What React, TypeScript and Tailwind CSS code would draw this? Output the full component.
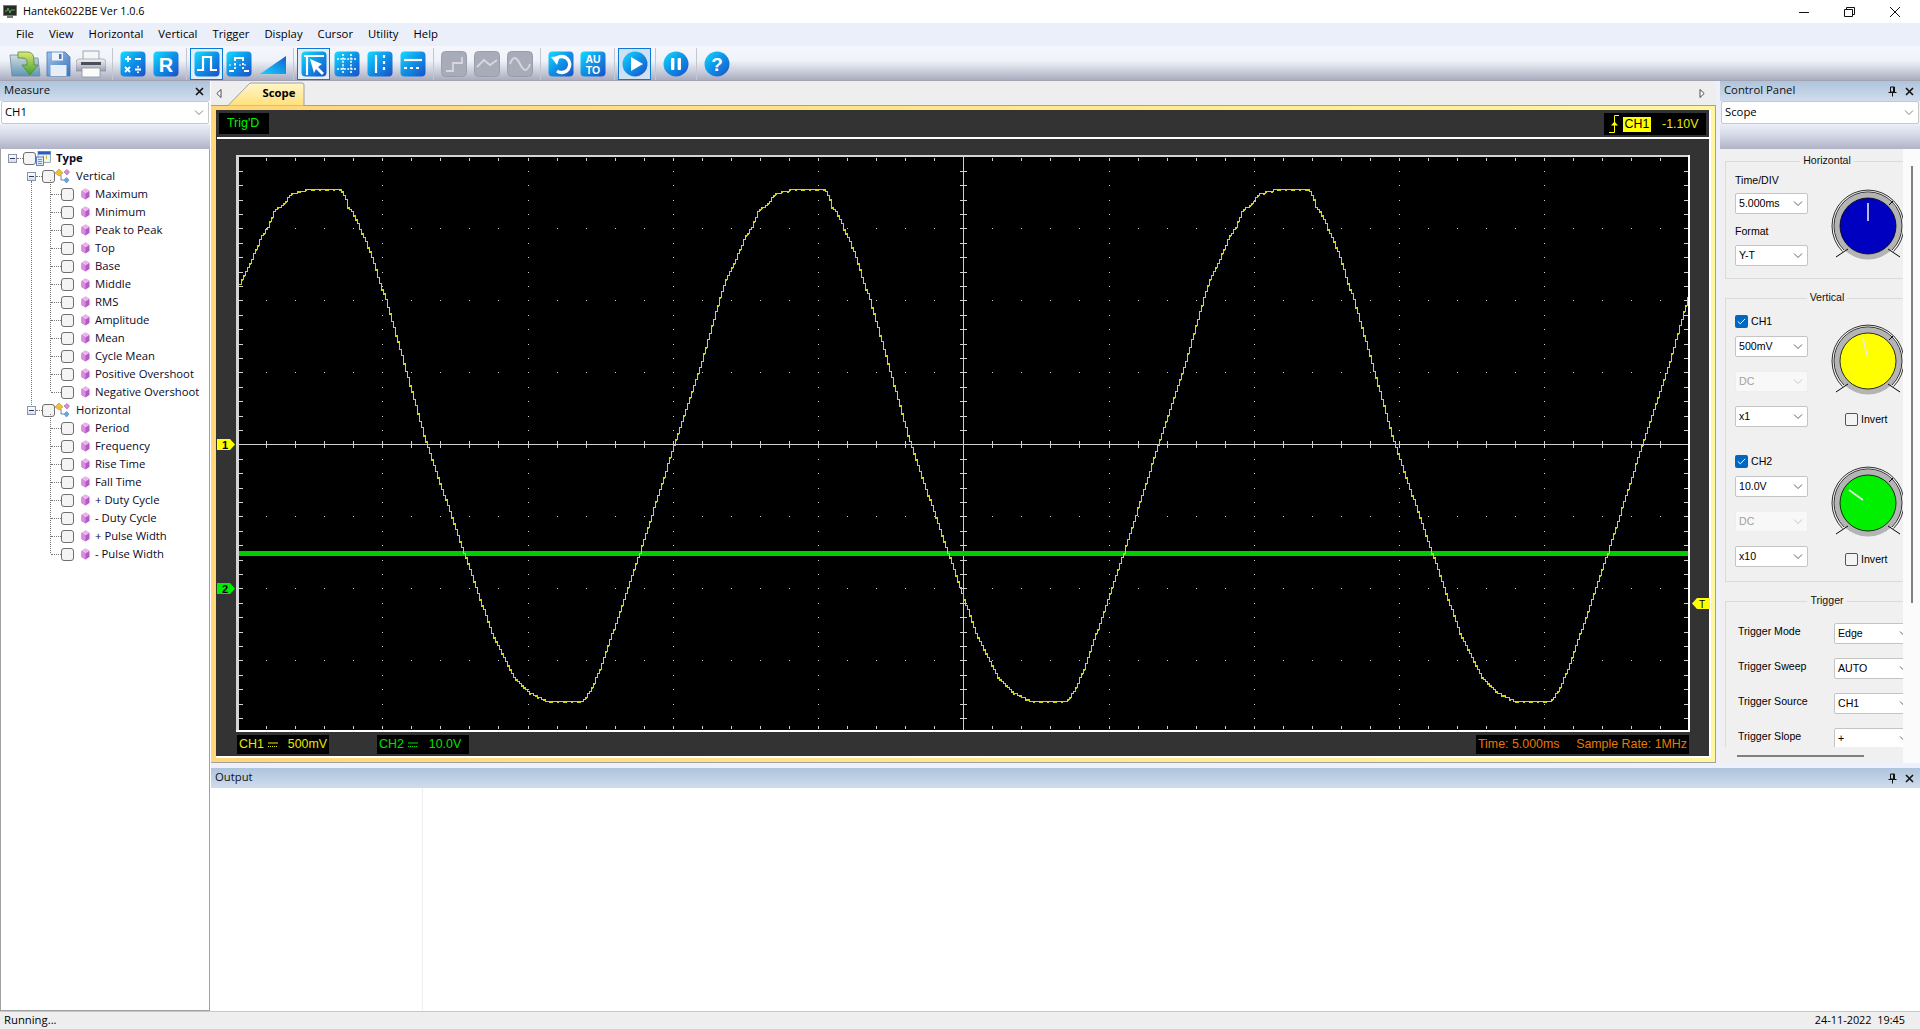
import React from "react";

const ui = "font-['Open_Sans','Noto_Sans',sans-serif]";
const arial = "font-['Liberation_Sans',Arial,sans-serif]";

// one period of the captured waveform, page pixels
const period = [
  [239, 285], [243, 275], [250, 262], [260, 238], [267, 227], [273, 212], [282, 205], [290, 195],
  [298, 192], [310, 190], [340, 189], [345, 200], [347, 208], [353, 215], [360, 232], [367, 247],
  [373, 263], [378, 282], [385, 300], [426, 446], [463, 553], [490, 631], [514, 680], [529, 694],
  [545, 701], [582, 702], [590, 690], [600, 667], [639, 553], [673, 446], [700, 365], [723, 285],
];
const waveY = (x: number) => {
  const px = 239 + ((x - 239) % 484);
  for (let i = 1; i < period.length; i++) {
    if (px <= period[i][0]) {
      const [x0, y0] = period[i - 1];
      const [x1, y1] = period[i];
      return y0 + ((px - x0) / (x1 - x0)) * (y1 - y0);
    }
  }
  return 285;
};
const buildWave = () => {
  let prev = Math.round(waveY(239));
  let line = `M239 ${prev}`;
  let blobs = "";
  for (let x = 241; x <= 1688; x += 2) {
    const y = Math.round(waveY(x) / 2) * 2;
    line += `H${x}V${y}`;
    // the sampled trace doubles up on some steps
    if ((x * 13) % 7 < 3) blobs += `M${x - 2} ${prev}h2v2h-2z`;
    prev = y;
  }
  return { line, blobs };
};
const wave = buildWave();

const range = (n: number) => Array.from({ length: n }, (_, i) => i);
const GX = (k: number) => Math.round(237 + 29.05 * k);
const GY = (k: number) => Math.round(157.3 + 14.4 * k);

const Plot = () => (
  <svg viewBox="236 156 1454 577" width={1454} height={577} className="block bg-black" shapeRendering="crispEdges">
    {/* dotted graticule */}
    {[1, 2, 3, 5, 6, 7].map((r) =>
      range(49).map((k) => <rect key={`r${r}-${k}`} x={GX(k + 1)} y={GY(r * 5)} width={1} height={1} fill="#d0d0d0" />)
    )}
    {[1, 2, 3, 4, 6, 7, 8, 9].map((c) =>
      range(39).map((k) => <rect key={`c${c}-${k}`} x={GX(c * 5)} y={GY(k + 1)} width={1} height={1} fill="#d0d0d0" />)
    )}
    {/* edge ticks */}
    {range(49).map((k) => (
      <g key={k} fill="#d0d0d0">
        <rect x={GX(k + 1)} y={159} width={1} height={k === 24 ? 6 : 3} />
        <rect x={GX(k + 1)} y={k === 24 ? 725 : 727} width={1} height={k === 24 ? 6 : 3} />
        <rect x={GX(k + 1)} y={442} width={1} height={7} />
      </g>
    ))}
    {range(39).map((k) => (
      <g key={k} fill="#d0d0d0">
        <rect x={239} y={GY(k + 1)} width={4} height={1} />
        <rect x={1684} y={GY(k + 1)} width={4} height={1} />
        <rect x={960} y={GY(k + 1)} width={7} height={1} />
      </g>
    ))}
    <rect x={239} y={445} width={1449} height={1} fill="#d0d0d0" />
    <rect x={963} y={158} width={1} height={573} fill="#d0d0d0" />
    <rect x={239} y={552} width={1449} height={5} fill="#00cc00" />
    <path d={wave.line} fill="none" stroke="#d8d800" strokeWidth={1} />
    <path d={wave.blobs} fill="#d8d800" />
    {/* frame */}
    <path d="M236 156H1688V158H239V731H236Z" fill="#d4d4d4" />
    <path d="M1688 156H1690V733H236V731H1688Z" fill="#ffffff" />
  </svg>
);

const Chevron = ({ color = "#707070" }: { color?: string }) => (
  <svg width={10} height={6} viewBox="0 0 10 6" className="shrink-0">
    <path d="M1 0.5L5 4.5L9 0.5" fill="none" stroke={color} strokeWidth={1} />
  </svg>
);

const Combo = ({ value, disabled, className = "w-[73px]" }: { value: string; disabled?: boolean; className?: string }) => (
  <div
    className={`h-[21px] shrink-0 flex items-center justify-between pl-[3px] pr-[4px] rounded-[2px] border ${className} ${
      disabled ? "bg-[#f8f8f8] border-[#eeeeee] text-[#a0a0a0]" : "bg-white border-[#c4c4c4] text-black"
    }`}
  >
    <span>{value}</span>
    <Chevron color={disabled ? "#c4c4c4" : "#606060"} />
  </div>
);

const Knob = ({ color, hand, className = "" }: { color: string; hand: number[]; className?: string }) => (
  <svg width={80} height={80} viewBox="-40 -40 80 80" className={`block shrink-0 ${className}`}>
    <path d="M-25.5 25.5A36 36 0 1 1 25.5 25.5" fill="none" stroke="#000" strokeWidth={0.8} />
    <circle r={33.5} fill="#b4b4b4" />
    <path d="M-24 24A34 34 0 1 1 24 24" fill="none" stroke="#000" strokeWidth={0.8} />
    <path d="M-20 23L-32 31M20 23L32 31M21 -21L25 -25" stroke="#000" strokeWidth={1} />
    <circle r={28} fill={color} stroke="#000" strokeWidth={0.8} />
    <line x1={hand[0]} y1={hand[1]} x2={hand[2]} y2={hand[3]} stroke="#e8e8e8" strokeWidth={1.6} />
  </svg>
);

const GroupBox = ({ title, className, children }: { title: string; className: string; children: React.ReactNode }) => (
  <div className={`relative ml-[5px] w-[204px] border border-[#dadada] shrink-0 ${className}`}>
    <div className="absolute -top-[10px] left-0 right-0 flex justify-center">
      <span className="bg-[#f0f0f0] px-[3px] leading-[16px] text-[#111]">{title}</span>
    </div>
    {children}
  </div>
);

const BlueCheck = ({ label }: { label: string }) => (
  <div className="h-[13px] flex items-center gap-[3px]">
    <div className="w-[13px] h-[13px] rounded-[2px] bg-[#0067c0] flex items-center justify-center">
      <svg width={9} height={7} viewBox="0 0 9 7">
        <path d="M0.8 3.4L3.3 5.8L8.2 0.8" fill="none" stroke="#fff" strokeWidth={1} />
      </svg>
    </div>
    <span className="leading-[13px] -mt-px">{label}</span>
  </div>
);

const Invert = ({ className }: { className: string }) => (
  <div className={`ml-[17px] flex items-center gap-[3px] h-[13px] ${className}`}>
    <div className="w-[13px] h-[13px] rounded-[2px] border border-[#555] bg-[#f4f4f4]" />
    <span>Invert</span>
  </div>
);

const Channel = ({
  label, volts, probe, color, hand, knobClass, invertClass,
}: {
  label: string; volts: string; probe: string; color: string; hand: number[]; knobClass: string; invertClass: string;
}) => (
  <div className="flex pl-[9px]">
    <div className="w-[73px] flex flex-col">
      <BlueCheck label={label} />
      <Combo value={volts} className="w-[73px] mt-[8px]" />
      <Combo value="DC" disabled className="w-[73px] mt-[14px]" />
      <Combo value={probe} className="w-[73px] mt-[14px]" />
    </div>
    <div className="ml-[20px] flex flex-col">
      <Knob color={color} hand={hand} className={knobClass} />
      <Invert className={invertClass} />
    </div>
  </div>
);

const triggerRows = [
  ["Trigger Mode", "Edge"],
  ["Trigger Sweep", "AUTO"],
  ["Trigger Source", "CH1"],
  ["Trigger Slope", "+"],
];

const ControlPanel = () => (
  <div className={`w-[200px] flex flex-col shrink-0 ${ui}`}>
    <PanelHeader title="Control Panel" pin />
    <PanelCombo value="Scope" />
    <Band />
    <div className={`h-[599px] flex bg-[#f0f0f0] text-[10.6px] overflow-hidden ${arial}`}>
      <div className="w-[183px] overflow-hidden flex flex-col">
        <GroupBox title="Horizontal" className="mt-[12px] h-[118px]">
          <div className="flex pl-[9px]">
            <div className="flex flex-col w-[73px] pt-[10px]">
              <div className="h-[16px] leading-[16px]">Time/DIV</div>
              <Combo value="5.000ms" className="w-[73px] mt-[5px]" />
              <div className="h-[16px] leading-[16px] mt-[9px]">Format</div>
              <Combo value="Y-T" className="w-[73px] mt-[6px]" />
            </div>
            <Knob color="#0000c0" hand={[0, -23, 0, -5]} className="ml-[20px] mt-[24px]" />
          </div>
        </GroupBox>
        <GroupBox title="Vertical" className="mt-[19px] h-[284px] pt-[16px]">
          <Channel label="CH1" volts="500mV" probe="x1" color="#ffff00" hand={[-5, -23, -1, -5]} knobClass="mt-[6px]" invertClass="mt-[12px]" />
          <div className="h-[28px]" />
          <Channel label="CH2" volts="10.0V" probe="x10" color="#00f000" hand={[-19, -13, -5, -3]} knobClass="mt-[8px]" invertClass="mt-[10px]" />
        </GroupBox>
        <GroupBox title="Trigger" className="mt-[19px] h-[160px] pt-[21px]">
          <div className="flex flex-col gap-[14px] pl-[12px]">
            {triggerRows.map(([label, value]) => (
              <div key={label} className="flex items-center">
                <span className="w-[96px] -mt-[3px]">{label}</span>
                <Combo value={value} className="w-[80px]" />
              </div>
            ))}
          </div>
        </GroupBox>
      </div>
      <div className="w-[17px] bg-[#fbfbfb] pt-[17px] pl-[8px]">
        <div className="w-[2px] h-[437px] bg-[#808080]" />
      </div>
    </div>
    <div className="h-[16px] bg-[#f0f0f0] flex">
      <div className="w-[183px] pt-[8px] pl-[17px]">
        <div className="w-[127px] h-[2px] bg-[#808080]" />
      </div>
      <div className="w-[17px] bg-[#fbfbfb]" />
    </div>
  </div>
);

const CloseX = () => (
  <svg width={9} height={9} viewBox="0 0 9 9">
    <path d="M1 1L8 8M8 1L1 8" stroke="#111" strokeWidth={1.6} />
  </svg>
);
const Pin = () => (
  <svg width={9} height={11} viewBox="0 0 9 11">
    <path d="M2.5 1H6.5V6H2.5ZM5.5 1V6M0.5 6.5H8.5M4.5 7V10.5" fill="none" stroke="#111" strokeWidth={1} />
  </svg>
);

const PanelHeader = ({ title, pin, className = "" }: { title: string; pin?: boolean; className?: string }) => (
  <div className={`h-[20px] shrink-0 flex items-center bg-[linear-gradient(180deg,#aec4dc,#d0dcec)] text-[11.3px] text-[#111] pl-[4px] ${className}`}>
    <span className="flex-1 -mt-px">{title}</span>
    {pin && <span className="mr-[8px] flex"><Pin /></span>}
    <span className="mr-[6px] flex"><CloseX /></span>
  </div>
);

const PanelCombo = ({ value }: { value: string }) => (
  <div className="h-[23px] shrink-0 mx-[1px] bg-white border border-[#c8c8c8] rounded-[2px] flex items-center justify-between pl-[3px] pr-[4px] text-[11.3px]">
    <span>{value}</span>
    <Chevron color="#808080" />
  </div>
);

const Band = () => <div className="h-[25px] shrink-0 bg-[linear-gradient(180deg,#eceff8,#d8dbe8_40%,#b0b3c6)]" />;

// ---- toolbar icons ----
const Defs = () => (
  <svg width={0} height={0} className="block">
    <defs>
      <linearGradient id="btn" x1="0" y1="0" x2="1" y2="1">
        <stop offset="0" stopColor="#14dcff" />
        <stop offset="0.5" stopColor="#0f90e6" />
        <stop offset="1" stopColor="#1a50c8" />
      </linearGradient>
      <linearGradient id="ramp" x1="0" y1="1" x2="1" y2="0">
        <stop offset="0" stopColor="#18d4ff" />
        <stop offset="1" stopColor="#1260d0" />
      </linearGradient>
      <linearGradient id="folder" x1="0" y1="0" x2="0" y2="1">
        <stop offset="0" stopColor="#d4dde0" />
        <stop offset="1" stopColor="#5f94b8" />
      </linearGradient>
      <linearGradient id="arrow" x1="0" y1="0" x2="0" y2="1">
        <stop offset="0" stopColor="#e0e870" />
        <stop offset="1" stopColor="#40a030" />
      </linearGradient>
      <linearGradient id="floppy" x1="0" y1="0" x2="1" y2="1">
        <stop offset="0" stopColor="#a0c4ec" />
        <stop offset="1" stopColor="#3a74bc" />
      </linearGradient>
      <linearGradient id="printer" x1="0" y1="0" x2="0" y2="1">
        <stop offset="0" stopColor="#f4f4f4" />
        <stop offset="1" stopColor="#9aa0ac" />
      </linearGradient>
    </defs>
  </svg>
);

const Btn = ({ children, circle, gray }: { children: React.ReactNode; circle?: boolean; gray?: boolean }) => (
  <svg width={26} height={26} viewBox="0 0 26 26" className="block shrink-0">
    {circle ? (
      <circle cx={13} cy={13} r={12.5} fill="url(#btn)" />
    ) : (
      <rect x={0.5} y={0.5} width={25} height={25} rx={4} fill={gray ? "#a8acb8" : "url(#btn)"} stroke={gray ? "#9a9eaa" : "none"} />
    )}
    {children}
  </svg>
);

const W = { fill: "none", stroke: "#fff", strokeWidth: 2.2 };
const G = { fill: "none", stroke: "#d6d8de", strokeWidth: 1.8 };

const Sep = () => <div className="w-px h-[32px] bg-[#c4c6d0] shrink-0" />;
const Selected = ({ children, strong }: { children: React.ReactNode; strong?: boolean }) => (
  <div className={`w-[33px] h-[32px] shrink-0 flex items-center justify-center border border-[#0a78d4] ${strong ? "bg-[#cfe0f2]" : "bg-[#e4eefa]"}`}>
    {children}
  </div>
);

const Toolbar = () => (
  <div className="h-[35px] shrink-0 flex items-center pl-[9px] bg-[linear-gradient(180deg,#f6f7fd_0%,#f0f2fa_42%,#c0c3d2_80%,#aaadc0_97%,#9a9aa8_100%)]">
    <svg width={32} height={28} viewBox="0 0 32 28" className="block shrink-0">
      <path d="M1 5H11L13 8H29L31 26H3Z" fill="url(#folder)" stroke="#6a8a9c" strokeWidth={0.8} />
      <path d="M9 2H18C24 2 25 6 25 12V15H29L21 25L13 15H18V12C18 9 16 8 13 8H9Z" fill="url(#arrow)" stroke="#4a8a3a" strokeWidth={0.8} />
    </svg>
    <svg width={25} height={26} viewBox="0 0 25 26" className="block shrink-0 ml-[5px]">
      <path d="M1 1H19L24 6V25H1Z" fill="url(#floppy)" stroke="#4878b4" strokeWidth={0.8} />
      <rect x={6} y={1.5} width={11} height={8} fill="#eef4fa" />
      <rect x={13} y={3} width={2.5} height={5} fill="#4878b4" />
      <rect x={4.5} y={14} width={16} height={11} fill="#e8eef6" />
    </svg>
    <svg width={30} height={28} viewBox="0 0 30 28" className="block shrink-0 ml-[5px]">
      <rect x={7} y={1} width={16} height={11} fill="#f4f6f8" stroke="#8a93a3" strokeWidth={0.8} />
      <path d="M3 9H27Q30 9 30 13V21H0V13Q0 9 3 9Z" fill="url(#printer)" stroke="#808694" strokeWidth={0.6} />
      <rect x={5} y={12} width={20} height={3} fill="#4a4f5a" />
      <rect x={6} y={18} width={18} height={9} fill="#fbfbfb" stroke="#8a93a3" strokeWidth={0.8} />
    </svg>
    <div className="ml-[6px]"><Sep /></div>
    <div className="ml-[7px]">
      <Btn>
        <path d="M5 8H11M8 5V11M15 8H21M5 16L10 21M10 16L5 21M15 18.5H21" {...W} strokeWidth={1.8} />
        <circle cx={18} cy={15.8} r={1} fill="#fff" />
        <circle cx={18} cy={21.2} r={1} fill="#fff" />
      </Btn>
    </div>
    <div className="ml-[7px]">
      <Btn>
        <text x={13} y={21} textAnchor="middle" fontSize={20} fontWeight={700} fill="#fff" fontFamily="'Liberation Sans',sans-serif">R</text>
      </Btn>
    </div>
    <div className="ml-[7px]"><Sep /></div>
    <div className="ml-[3px]">
      <Selected>
        <Btn><path d="M3 19H9V6H17V19H23" {...W} /></Btn>
      </Selected>
    </div>
    <div className="ml-[3px]">
      <Btn>
        <path d="M3 20H8M18 20H23M8 7H18" {...W} />
        <path d="M9 8V20M17 8V20" {...W} strokeWidth={1.8} strokeDasharray="2 2" />
        <path d="M3 14H23" {...W} strokeWidth={1} strokeDasharray="2 3" />
      </Btn>
    </div>
    <svg width={26} height={26} viewBox="0 0 26 26" className="block shrink-0 ml-[8px]">
      <path d="M0 23H26V5Z" fill="url(#ramp)" />
    </svg>
    <div className="ml-[7px]"><Sep /></div>
    <div className="ml-[3px]">
      <Selected>
        <Btn>
          <path d="M3 5H23M6 5V24" {...W} />
          <path d="M9 8L21 13L17 16L23 22L21 24L15 18L13 22Z" fill="#fff" />
        </Btn>
      </Selected>
    </div>
    <div className="ml-[4px]">
      <Btn>
        <path d="M3 8H23M3 18H23M9 3V23M17 3V23" {...W} strokeWidth={1.6} strokeDasharray="2 1.4" />
      </Btn>
    </div>
    <div className="ml-[7px]">
      <Btn><path d="M9 4V22" {...W} /><path d="M17 4V22" {...W} strokeDasharray="3 3" /></Btn>
    </div>
    <div className="ml-[7px]">
      <Btn><path d="M4 9H22" {...W} /><path d="M4 17H22" {...W} strokeDasharray="3 3" /></Btn>
    </div>
    <div className="ml-[7px]"><Sep /></div>
    <div className="ml-[7px]">
      <Btn gray><path d="M5 20H12V12H21V6" {...G} /></Btn>
    </div>
    <div className="ml-[7px]">
      <Btn gray><path d="M3 16L10 9L16 14L23 9" {...G} /></Btn>
    </div>
    <div className="ml-[7px]">
      <Btn gray><path d="M3 13C6 5 9 5 13 13C17 21 20 21 23 13" {...G} /></Btn>
    </div>
    <div className="ml-[7px]"><Sep /></div>
    <div className="ml-[7px]">
      <Btn>
        <path d="M8 8A8 8 0 1 1 9 20" fill="none" stroke="#fff" strokeWidth={3.4} />
        <path d="M3 6L12 5L9 14Z" fill="#fff" />
      </Btn>
    </div>
    <div className="ml-[6px]">
      <Btn>
        <text x={13} y={11.5} textAnchor="middle" fontSize={10.5} fontWeight={700} fill="#fff" fontFamily="'Liberation Sans',sans-serif">AU</text>
        <text x={13} y={22.5} textAnchor="middle" fontSize={10.5} fontWeight={700} fill="#fff" fontFamily="'Liberation Sans',sans-serif">TO</text>
      </Btn>
    </div>
    <div className="ml-[8px]"><Sep /></div>
    <div className="ml-[3px]">
      <Selected strong>
        <Btn circle><path d="M9 6L21 13L9 20Z" fill="#fff" /></Btn>
      </Selected>
    </div>
    <div className="ml-[4px]"><Sep /></div>
    <div className="ml-[7px]">
      <Btn circle><rect x={8} y={7} width={3.4} height={12} rx={1} fill="#fff" /><rect x={14.6} y={7} width={3.4} height={12} rx={1} fill="#fff" /></Btn>
    </div>
    <div className="ml-[7px]"><Sep /></div>
    <div className="ml-[7px]">
      <Btn circle>
        <text x={13} y={20} textAnchor="middle" fontSize={19} fontWeight={700} fill="#fff" fontFamily="'Liberation Sans',sans-serif">?</text>
      </Btn>
    </div>
  </div>
);

// ---- tree ----
const Box = () => <div className="w-[13px] h-[13px] shrink-0 rounded-[3px] border border-[#6f6f6f] bg-[#f4f4f4]" />;
const Expander = () => (
  <div className="w-[9px] h-[9px] shrink-0 border border-[#8a93a8] bg-[linear-gradient(180deg,#ffffff,#d8dce6)] flex items-center justify-center">
    <div className="w-[5px] h-px bg-[#2a3a6a]" />
  </div>
);
const Gem = () => (
  <svg width={9} height={12} viewBox="0 0 9 12" className="block shrink-0">
    <path d="M4.5 0.5L8.5 3V9L4.5 11.5L0.5 9V3Z" fill="#b45ac8" />
    <path d="M4.5 0.5L8.5 3L4.5 5.5L0.5 3Z" fill="#eeb4ee" />
    <path d="M0.5 3L4.5 5.5V11.5L0.5 9Z" fill="#d88cdc" />
  </svg>
);
const GroupIcon = () => (
  <svg width={15} height={16} viewBox="0 0 15 16" className="block shrink-0">
    <path d="M0 5L4 1L8 5L4 8Z" fill="#f0c030" stroke="#a88420" strokeWidth={0.5} />
    <path d="M9 4L12 1.5L14.5 4L12 7Z" fill="#d88cdc" stroke="#8a4a9c" strokeWidth={0.5} />
    <path d="M9 12L11.5 9.5L14 12L11.5 15Z" fill="#6aa4e4" stroke="#3468a8" strokeWidth={0.5} />
    <path d="M6 7V12H9" fill="none" stroke="#406890" strokeWidth={0.8} />
  </svg>
);
const TypeIcon = () => (
  <svg width={15} height={15} viewBox="0 0 15 15" className="block shrink-0">
    <rect x={2} y={0.5} width={12.5} height={11} fill="#f4f4e4" stroke="#60708c" strokeWidth={0.6} />
    <rect x={2} y={0.5} width={12.5} height={3} fill="#2a5cc8" />
    <path d="M7.5 4.5V10M10.5 4.5V8" stroke="#c0a020" strokeWidth={0.8} />
    <rect x={0.5} y={6} width={7} height={8.5} fill="#dfeafa" stroke="#3468b8" strokeWidth={0.8} />
    <path d="M2 8.5H6M2 10.5H6M2 12.5H6" stroke="#3468b8" strokeWidth={0.7} />
  </svg>
);

const Leaf = ({ label }: { label: string }) => (
  <div className="h-[18px] flex items-center pl-[50px]">
    <div className="w-[10px] border-t border-dotted border-[#777]" />
    <Box />
    <div className="ml-[7px]"><Gem /></div>
    <span className="ml-[5px]">{label}</span>
  </div>
);

const Branch = ({ label, items, spine }: { label: string; items: string[]; spine: string }) => (
  <div className="relative">
    <div className={`absolute left-[49px] top-[13px] border-l border-dotted border-[#777] ${spine}`} />
    <div className="h-[18px] flex items-center pl-[26px]">
      <Expander />
      <div className="w-[6px] border-t border-dotted border-[#777]" />
      <Box />
      <GroupIcon />
      <span className="ml-[6px]">{label}</span>
    </div>
    {items.map((l) => <Leaf key={l} label={l} />)}
  </div>
);

const verticalItems = ["Maximum", "Minimum", "Peak to Peak", "Top", "Base", "Middle", "RMS", "Amplitude", "Mean", "Cycle Mean", "Positive Overshoot", "Negative Overshoot"];
const horizontalItems = ["Period", "Frequency", "Rise Time", "Fall Time", "+ Duty Cycle", "- Duty Cycle", "+ Pulse Width", "- Pulse Width"];

const MeasurePanel = () => (
  <div className={`w-[211px] shrink-0 flex flex-col pr-px ${ui}`}>
    <PanelHeader title="Measure" />
    <PanelCombo value="CH1" />
    <Band />
    <div className="relative flex-1 bg-white border border-[#a0a0a0] border-t-0 text-[11.3px] text-[#0a0a28]">
      <div className="absolute left-[30px] top-[32px] h-[224px] border-l border-dotted border-[#777]" />
      <div className="h-[18px] flex items-center pl-[7px]">
        <Expander />
        <div className="w-[6px] border-t border-dotted border-[#777]" />
        <Box />
        <TypeIcon />
        <span className="ml-[5px] font-bold">Type</span>
      </div>
      <Branch label="Vertical" items={verticalItems} spine="h-[211px]" />
      <Branch label="Horizontal" items={horizontalItems} spine="h-[139px]" />
    </div>
  </div>
);

// ---- scope ----
const DcMark = ({ color }: { color: string }) => (
  <svg width={10} height={6} viewBox="0 0 10 6" className="block shrink-0">
    <path d="M0 1H10" stroke={color} strokeWidth={1} />
    <path d="M0 4.5H10" stroke={color} strokeWidth={1} strokeDasharray="1 1" />
  </svg>
);

const Tag = ({ label, color, className }: { label: string; color: string; className: string }) => (
  <svg width={18} height={11} viewBox="0 0 18 11" className={`absolute ${className}`}>
    <path d="M0 0H13L18 5.5L13 11H0Z" fill={color} />
    <text x={8} y={10} textAnchor="middle" fontSize={11} fontWeight={700} fill="#000" fontFamily="'Liberation Sans',sans-serif">{label}</text>
  </svg>
);

const ScopeView = () => (
  <div className={`relative flex-1 bg-[#333333] border-r-2 border-b-2 border-white flex flex-col text-[12.4px] leading-none ${arial}`}>
    <div className="h-[27px] shrink-0 flex items-start justify-between pt-[3px] px-[3px]">
      <div className="w-[50px] h-[21px] bg-black text-[#00f000] flex items-center pl-[8px]">Trig'D</div>
      <div className="w-[102px] h-[22px] bg-black flex items-center pl-[4px] text-[#e8e800]">
        <svg width={12} height={18} viewBox="0 0 12 18" className="block shrink-0">
          <path d="M11 0.5H6.5V17.5H1" fill="none" stroke="#ffff00" strokeWidth={1} />
          <path d="M6.5 6.5L10 10.5H3Z" fill="#ffff00" />
        </svg>
        <span className="ml-[3px] w-[28px] h-[15px] bg-[#ffff00] text-black flex items-center justify-center">CH1</span>
        <span className="ml-[11px]">-1.10V</span>
      </div>
    </div>
    <div className="h-[2px] shrink-0 bg-white mr-[-2px] ml-px" />
    <div className="mt-[16px] ml-[20px]"><Plot /></div>
    <div className="mt-[3px] flex">
      <div className="ml-[21px] w-[92px] h-[19px] bg-black text-[#e8e800] flex items-center pl-[2px]">
        CH1<span className="ml-[4px]"><DcMark color="#e8e800" /></span><span className="ml-[10px]">500mV</span>
      </div>
      <div className="ml-[48px] w-[92px] h-[19px] bg-black text-[#00e000] flex items-center pl-[2px]">
        CH2<span className="ml-[4px]"><DcMark color="#00e000" /></span><span className="ml-[11px]">10.0V</span>
      </div>
      <div className="ml-auto mr-[20px] w-[213px] h-[19px] bg-black text-[#e87800] flex items-center justify-between px-[2px]">
        <span>Time: 5.000ms</span>
        <span>Sample Rate: 1MHz</span>
      </div>
    </div>
    <Tag label="1" color="#ffff00" className="left-[1px] top-[329px]" />
    <Tag label="2" color="#00ee00" className="left-[1px] top-[473px]" />
    <svg width={18} height={11} viewBox="0 0 18 11" className="absolute left-[1476px] top-[488px]">
      <path d="M18 0H5L0 5.5L5 11H18Z" fill="#ffff00" />
      <text x={10} y={10} textAnchor="middle" fontSize={10} fill="#000" fontFamily="'Liberation Sans',sans-serif">T</text>
    </svg>
  </div>
);

const TabBar = () => (
  <div className={`h-[25px] shrink-0 bg-[#eeeeee] flex border-b border-[#a0a0a0] ${ui}`}>
    <svg width={6} height={9} viewBox="0 0 6 9" className="block self-center ml-[5px]">
      <path d="M5 0.5V8.5L0.8 4.5Z" fill="#fff" stroke="#222" strokeWidth={0.8} />
    </svg>
    <div className="relative ml-[5px] w-[78px] h-[24px] mt-[1px] flex items-center justify-center pl-[26px] text-[11.3px] font-bold">
      <svg width={78} height={24} viewBox="0 0 78 24" className="absolute left-0 top-0">
        <defs>
          <linearGradient id="tab" x1="0" y1="0" x2="0" y2="1">
            <stop offset="0" stopColor="#fff6cc" />
            <stop offset="1" stopColor="#ffe07a" />
          </linearGradient>
        </defs>
        <path d="M0.5 24L23 1H75Q77 1 77 3V24Z" fill="url(#tab)" stroke="#a0a0a0" strokeWidth={1} />
      </svg>
      <span className="relative -mt-px">Scope</span>
    </div>
    <div className="flex-1" />
    <svg width={6} height={9} viewBox="0 0 6 9" className="block self-center mr-[11px]">
      <path d="M1 0.5V8.5L5.2 4.5Z" fill="#fff" stroke="#222" strokeWidth={0.8} />
    </svg>
  </div>
);

const CenterPanel = () => (
  <div className="w-[1505px] shrink-0 flex flex-col">
    <TabBar />
    <div className="flex-1 flex flex-col pt-[4px] pl-[5px] pr-[4px] pb-[4px] border-r border-b border-[#a0a0a0] bg-[linear-gradient(90deg,#ffd678,#fff6a0)]">
      <ScopeView />
    </div>
  </div>
);

const menus = ["File", "View", "Horizontal", "Vertical", "Trigger", "Display", "Cursor", "Utility", "Help"];

export default function App() {
  return (
    <div className={`w-[1920px] h-[1029px] flex flex-col overflow-hidden bg-white text-black text-[11.3px] ${ui}`}>
      <Defs />
      <div className="h-[23px] shrink-0 flex items-center bg-white pl-[3px]">
        <svg width={14} height={14} viewBox="0 0 14 14" className="block shrink-0">
          <rect x={0.5} y={0.5} width={13} height={10} fill="#2a2a2a" stroke="#666" strokeWidth={0.6} />
          <path d="M2 6H4L5 3L7 8L8 5H12" fill="none" stroke="#50d050" strokeWidth={0.8} />
          <rect x={4} y={11} width={6} height={2} fill="#777" />
        </svg>
        <span className="ml-[6px] text-[10.9px]">Hantek6022BE Ver 1.0.6</span>
        <div className="flex-1" />
        <svg width={102} height={12} viewBox="0 0 102 12" className="block mr-[19px]">
          <path d="M0 6.5H10" stroke="#111" strokeWidth={1} />
          <path d="M45.5 3.5H53.5V10.5H45.5ZM47.5 3V1.5H55.5V8.5H54" fill="none" stroke="#111" strokeWidth={1} />
          <path d="M91 1L101 11M101 1L91 11" stroke="#111" strokeWidth={1} />
        </svg>
      </div>
      <div className="h-[23px] shrink-0 flex items-center bg-[#ebeffa] pl-[16px] gap-[15px] text-[11.3px]">
        {menus.map((m) => <span key={m} className="-mt-px">{m}</span>)}
      </div>
      <Toolbar />
      <div className="flex-1 min-h-0 flex">
        <MeasurePanel />
        <div className="flex-1 flex flex-col min-w-0 bg-[#eef1fb]">
          <div className="h-[682px] shrink-0 flex">
            <CenterPanel />
            <div className="w-[4px] shrink-0" />
            <ControlPanel />
          </div>
          <div className="h-[5px] shrink-0" />
          <div className={`flex-1 flex flex-col bg-white ${ui}`}>
            <PanelHeader title="Output" pin className="pl-[3px]" />
            <div className="flex-1 flex">
              <div className="w-[212px] border-r border-[#eeeeee]" />
            </div>
          </div>
        </div>
      </div>
      <div className="h-[18px] shrink-0 flex items-center justify-between pl-[4px] pr-[15px] bg-[#eeeeee] border-t border-[#c8c8c8] text-[11.3px]">
        <span>Running...</span>
        <span className="text-[10.9px]">24-11-2022&nbsp;&nbsp;19:45</span>
      </div>
    </div>
  );
}
